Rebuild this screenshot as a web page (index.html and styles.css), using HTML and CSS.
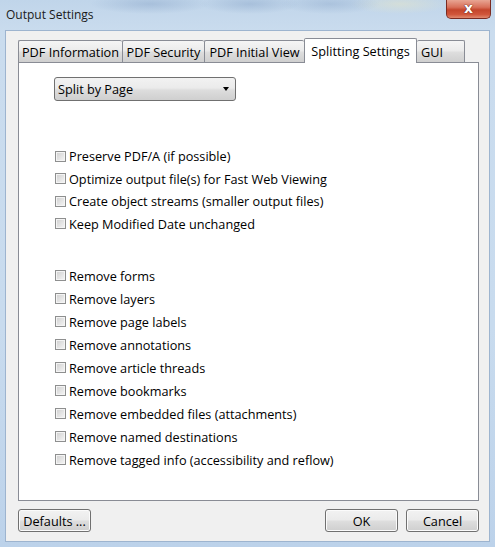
FILE: index.html
```html
<!DOCTYPE html>
<html>
<head>
<meta charset="utf-8">
<link rel="stylesheet" href="styles.css">
</head>
<body>
<div class="window">
  <div class="titlebar">
    <span class="title">Output Settings</span>
    <div class="close"><span class="x">x</span></div>
  </div>
  <div class="client">
    <div class="tabs">
      <div class="tab t1">PDF Information</div>
      <div class="tab t2">PDF Security</div>
      <div class="tab t3">PDF Initial View</div>
      <div class="tab active t4">Splitting Settings</div>
      <div class="tab t5">GUI</div>
    </div>
    <div class="panel">
      <div class="select">
        <span>Split by Page</span>
        <span class="arrow"></span>
      </div>
      <div class="group g1">
        <label class="row"><span class="cb"></span>Preserve PDF/A (if possible)</label>
        <label class="row"><span class="cb"></span>Optimize output file(s) for Fast Web Viewing</label>
        <label class="row"><span class="cb"></span>Create object streams (smaller output files)</label>
        <label class="row"><span class="cb"></span>Keep Modified Date unchanged</label>
      </div>
      <div class="group g2">
        <label class="row"><span class="cb"></span>Remove forms</label>
        <label class="row"><span class="cb"></span>Remove layers</label>
        <label class="row"><span class="cb"></span>Remove page labels</label>
        <label class="row"><span class="cb"></span>Remove annotations</label>
        <label class="row"><span class="cb"></span>Remove article threads</label>
        <label class="row"><span class="cb"></span>Remove bookmarks</label>
        <label class="row"><span class="cb"></span>Remove embedded files (attachments)</label>
        <label class="row"><span class="cb"></span>Remove named destinations</label>
        <label class="row"><span class="cb"></span>Remove tagged info (accessibility and reflow)</label>
      </div>
    </div>
    <div class="buttons">
      <div class="btn">Defaults ...</div>
      <div class="spacer"></div>
      <div class="btn">OK</div>
      <div class="btn">Cancel</div>
    </div>
  </div>
</div>
</body>
</html>
```

FILE: styles.css
```css
html, body {
  margin: 0;
  padding: 0;
}
body {
  width: 495px;
  height: 547px;
  overflow: hidden;
  font-family: "Open Sans", "Noto Sans", sans-serif;
  font-size: 12.7px;
  color: #000;
}
.window {
  width: 495px;
  height: 547px;
  display: flex;
  flex-direction: column;
  background:
    radial-gradient(ellipse 60px 10px at 150px 4px, rgba(120,150,190,0.35), transparent),
    radial-gradient(ellipse 50px 10px at 250px 4px, rgba(120,150,190,0.35), transparent),
    radial-gradient(ellipse 50px 10px at 330px 4px, rgba(120,150,190,0.3), transparent),
    radial-gradient(ellipse 50px 10px at 400px 4px, rgba(230,230,200,0.5), transparent),
    linear-gradient(180deg, #c0d5ea 0%, #cadcee 6%, #c8dbee 60%, #bcd2ea 100%);
  box-sizing: border-box;
}
.titlebar {
  height: 30px;
  display: flex;
  align-items: flex-start;
  padding-left: 6px;
  box-sizing: border-box;
}
.title {
  margin-top: 6px;
  font-size: 12px;
  color: #1a1a1a;
}
.close {
  margin-left: auto;
  margin-right: 4px;
  width: 45px;
  height: 19px;
  box-sizing: border-box;
  border: 1px solid #7a2b22;
  border-top: none;
  border-radius: 0 0 5px 5px;
  background: linear-gradient(180deg, #e8a593 0%, #d8705a 40%, #c4452c 55%, #d0553a 80%, #e0896f 100%);
  display: flex;
  align-items: center;
  justify-content: center;
}
.x {
  color: #fff;
  font-family: "DejaVu Sans", sans-serif;
  font-weight: bold;
  font-size: 14px;
  line-height: 14px;
  margin-top: -2px;
  text-shadow: 0 0 1px #5a1a10, 0 0 1px #5a1a10;
}
.client {
  margin: 0 5px 5px 5px;
  flex: 1;
  background: #f0f0f0;
  border: 1px solid #9db4cf;
  padding: 7px 10px 8px 12px;
  display: flex;
  flex-direction: column;
}
.tabs {
  display: flex;
  align-items: flex-end;
  height: 24px;
  position: relative;
  z-index: 1;
}
.tab {
  height: 22px;
  box-sizing: border-box;
  border: 1px solid #898c95;
  border-bottom: none;
  border-right: none;
  background: linear-gradient(180deg, #f5f5f5 0%, #ebebeb 45%, #dddddd 55%, #cfcfcf 100%);
  display: flex;
  align-items: center;
  justify-content: center;
  white-space: nowrap;
  border-radius: 2px 2px 0 0;
}
.t1 { width: 104px; }
.t2 { width: 82px; }
.t3 { width: 100px; }
.t4 { width: 113px; }
.t5 { width: 48px; border-right: 1px solid #898c95; justify-content: flex-start; padding-left: 4px; }
.tab.active {
  height: 25px;
  margin-bottom: -1px;
  background: #fff;
  border-right: 1px solid #898c95;
  align-items: flex-start;
  padding-top: 3px;
}
.tab.active + .tab { border-left: none; }
.panel {
  height: 439px;
  box-sizing: border-box;
  width: 461px;
  background: #fff;
  border: 1px solid #898c95;
  padding: 14px 0 0 35px;
}
.select {
  width: 182px;
  height: 24px;
  box-sizing: border-box;
  border: 1px solid #707070;
  border-radius: 3px;
  background: linear-gradient(180deg, #f2f2f2 0%, #ebebeb 45%, #dddddd 55%, #cfcfcf 100%);
  display: flex;
  align-items: center;
  padding-left: 3px;
  padding-right: 6px;
}
.arrow {
  margin-left: auto;
  width: 0;
  height: 0;
  border-left: 3px solid transparent;
  border-right: 3px solid transparent;
  border-top: 4px solid #000;
}
.group {
  display: flex;
  flex-direction: column;
}
.g1 { margin-top: 44px; }
.g2 { margin-top: 29px; }
.row {
  height: 23px;
  display: flex;
  align-items: center;
  white-space: nowrap;
}
.g1 .row { height: 22.5px; }
.cb {
  width: 11px;
  height: 11px;
  box-sizing: border-box;
  border: 1px solid #8e8f8f;
  box-shadow: inset 0 0 0 1px #f4f4f4;
  background: linear-gradient(135deg, #cfcfcf 0%, #e6e6e6 60%, #f6f6f6 100%);
  margin-left: 1px;
  margin-right: 3px;
  flex: none;
}
.buttons {
  display: flex;
  margin-top: 8px;
  gap: 8px;
}
.spacer { flex: 1; }
.btn {
  width: 73px;
  height: 23px;
  box-sizing: border-box;
  border: 1px solid #707070;
  border-radius: 3px;
  background: linear-gradient(180deg, #f2f2f2 0%, #ebebeb 45%, #dddddd 55%, #cfcfcf 100%);
  box-shadow: inset 0 0 0 1px #fbfbfb;
  display: flex;
  align-items: center;
  justify-content: center;
}
```
